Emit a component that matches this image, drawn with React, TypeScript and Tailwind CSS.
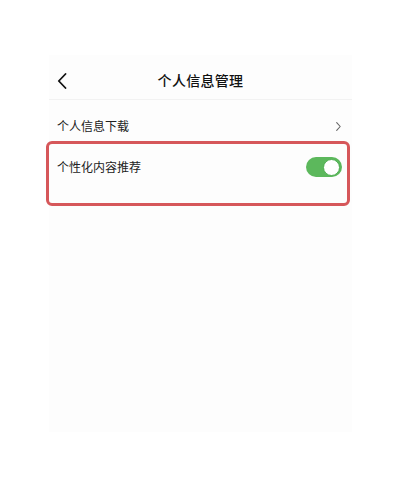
export default function App() {
  return (
    <div
      className="w-[400px] h-[493px] bg-white pt-[55px]"
      style={{ fontFamily: '"Noto Sans CJK SC", "Noto Sans", sans-serif' }}
    >
      <div className="ml-[49px] w-[303px] h-[377px] bg-[#fdfdfd]">
        {/* Header */}
        <div className="relative h-[45px] flex items-center justify-center border-b border-[#f2f2f2] pt-[6px]">
          <button className="absolute left-[8px] top-[18px] w-[10px] h-[16px] flex items-center">
            <svg width="10" height="16" viewBox="0 0 10 16" fill="none">
              <path d="M8.5 1 L1.8 8 L8.5 15" stroke="#111" strokeWidth="1.8" strokeLinecap="round" strokeLinejoin="round" />
            </svg>
          </button>
          <h1 className="text-[14px] font-medium text-[#111] tracking-[0.3px]">个人信息管理</h1>
        </div>

        {/* 个人信息下载 */}
        <div className="h-[41px] flex items-center justify-between pl-[8px] pr-[11px] pt-[11px]">
          <span className="text-[12px] text-[#222]">个人信息下载</span>
          <svg width="5" height="9" viewBox="0 0 5 9" fill="none">
            <path d="M0.7 0.7 L4.2 4.5 L0.7 8.3" stroke="#666" strokeWidth="1.1" strokeLinecap="round" strokeLinejoin="round" />
          </svg>
        </div>

        {/* 个性化内容推荐 (highlighted) */}
        <div className="ml-[-3px] w-[304px] h-[65px] border-[3px] border-[#d6575a] rounded-[6px]">
          <div className="h-[46px] flex items-center justify-between pl-[8px] pr-[5px]">
            <span className="text-[12px] text-[#222]">个性化内容推荐</span>
            <div className="w-[36px] h-[20px] rounded-full bg-[#5cb85c] flex items-center justify-end pr-[2px]">
              <div className="w-[17px] h-[17px] rounded-full bg-white border border-[#4fae52]" />
            </div>
          </div>
        </div>
      </div>
    </div>
  );
}
